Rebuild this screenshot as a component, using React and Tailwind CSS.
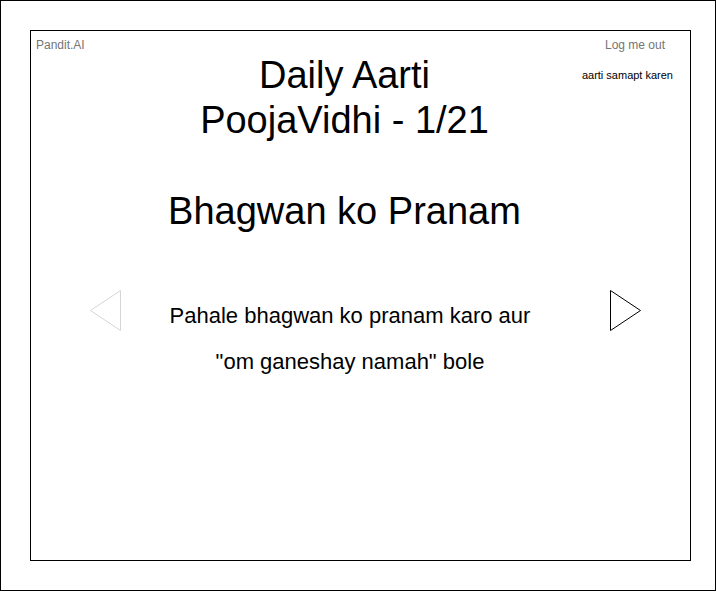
function Header() {
  return (
    <header className="grid grid-cols-[96px_1fr_120px] pr-2">
      <p className="pt-1.5 pl-[5px] text-[12px] leading-4 text-[#757575]">Pandit.AI</p>
      <h1 className="pt-[22px] text-center text-[38px] leading-[45px]">
        Daily Aarti
        <br />
        PoojaVidhi - 1/21
      </h1>
      <div className="flex flex-col items-end gap-3.5 pt-1.5 pr-[9px]">
        <button type="button" className="mr-2 text-[12px] leading-4 text-[#757575]">
          Log me out
        </button>
        <button type="button" className="text-[11px] leading-4 whitespace-nowrap">
          aarti samapt karen
        </button>
      </div>
    </header>
  );
}

export default function App() {
  return (
    <div
      className="mb-px flex min-h-[calc(100vh-1px)] flex-col border border-black bg-white py-[29px] pr-6 pl-[29px] text-black"
      style={{ fontFamily: '"Liberation Sans", Helvetica, Arial, sans-serif' }}
    >
      <div className="flex flex-1 flex-col border border-black">
        <Header />
        <main>
          <h2 className="mt-[46px] pr-8 text-center text-[38px] leading-[45px]">Bhagwan ko Pranam</h2>
          <div className="mt-14 flex items-start justify-between pr-12 pl-[59px]">
            <button type="button" aria-label="Previous step" disabled className="text-[#d6d6d6]">
              <svg width="32" height="42" viewBox="0 0 32 42" fill="none" stroke="currentColor">
                <path d="M30.5 0.5V40.5L0.5 20.5Z" />
              </svg>
            </button>
            <p className="w-[400px] pt-[3px] pr-8 text-center text-[22px] leading-[46px]">
              Pahale bhagwan ko pranam karo aur "om ganeshay namah" bole
            </p>
            <button type="button" aria-label="Next step">
              <svg width="32" height="42" viewBox="0 0 32 42" fill="none" stroke="currentColor">
                <path d="M0.5 0.5V40.5L30.5 20.5Z" />
              </svg>
            </button>
          </div>
        </main>
      </div>
    </div>
  );
}
